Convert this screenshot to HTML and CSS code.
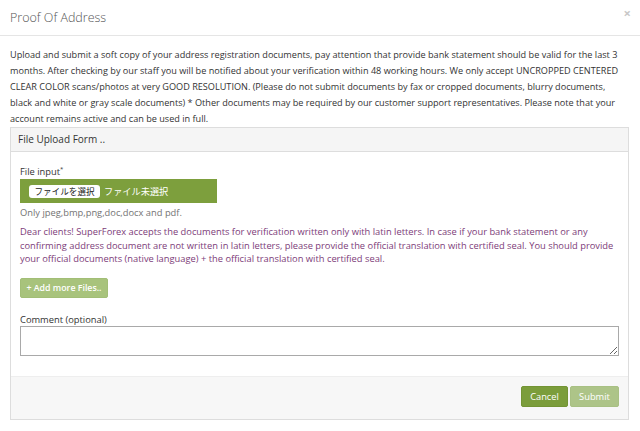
FILE: index.html
```html
<!DOCTYPE html>
<html lang="en">
<head>
<meta charset="utf-8">
<title>Proof Of Address</title>
<link rel="stylesheet" href="styles.css">
</head>
<body>
<div class="modal">
  <div class="modal-header">
    <h4 class="modal-title">Proof Of Address</h4>
    <span class="close">×</span>
  </div>
  <div class="modal-body">
    <p class="intro">Upload and submit a soft copy of your address registration documents, pay attention that provide bank statement should be valid for the last 3 months. After checking by our staff you will be notified about your verification within 48 working hours. We only accept UNCROPPED CENTERED CLEAR COLOR scans/photos at very GOOD RESOLUTION. (Please do not submit documents by fax or cropped documents, blurry documents, black and white or gray scale documents) * Other documents may be required by our customer support representatives. Please note that your account remains active and can be used in full.</p>
    <div class="panel">
      <div class="panel-heading">File Upload Form ..</div>
      <div class="panel-body">
        <label class="field-label">File input<sup>*</sup></label>
        <div class="file-input">
          <span class="file-btn">ファイルを選択</span>
          <span class="file-name">ファイル未選択</span>
        </div>
        <p class="help">Only jpeg,bmp,png,doc,docx and pdf.</p>
        <p class="notice">Dear clients! SuperForex accepts the documents for verification written only with latin letters. In case if your bank statement or any confirming address document are not written in latin letters, please provide the official translation with certified seal. You should provide your official documents (native language) + the official translation with certified seal.</p>
        <button class="btn btn-add" type="button">+ Add more Files..</button>
        <label class="comment-label">Comment (optional)</label>
        <textarea class="comment"></textarea>
      </div>
      <div class="panel-footer">
        <button class="btn btn-cancel" type="button">Cancel</button>
        <button class="btn btn-submit" type="button">Submit</button>
      </div>
    </div>
  </div>
</div>
</body>
</html>
```
FILE: styles.css
```css
html, body {
  margin: 0;
  padding: 0;
  background: #fff;
}
body {
  font-family: "Open Sans", "Noto Sans CJK JP", sans-serif;
  color: #333;
  font-size: 9.33px;
}
.modal-header {
  height: 35px;
  border-bottom: 1px solid #e5e5e5;
  display: flex;
  align-items: center;
  justify-content: space-between;
  padding: 0 9px 0 10px;
}
.modal-title {
  margin: 0;
  font-size: 12.5px;
  font-weight: 300;
  color: #555;
  line-height: 20px;
}
.close {
  font-size: 13px;
  font-weight: 700;
  color: #c8c8c8;
  line-height: 14px;
  margin-top: -9px;
}
.modal-body {
  padding: 11px 11px 0 10px;
}
.intro {
  margin: 0;
  line-height: 16px;
  font-size: 9.15px;
}
.panel {
  border: 1px solid #ddd;
}
.panel-heading {
  background: #f5f5f5;
  border-bottom: 1px solid #ddd;
  height: 23px;
  line-height: 23px;
  padding: 0 7px;
  font-size: 10px;
  color: #333;
}
.panel-body {
  padding: 13px 9px 20px 9px;
}
.field-label {
  display: block;
  line-height: 13px;
  height: 13px;
}
.field-label sup {
  font-size: 6px;
  line-height: 0;
  vertical-align: 4px;
}
.file-input {
  margin-top: 1px;
  width: 197px;
  height: 24px;
  box-sizing: border-box;
  background: #7d9f3d;
  display: flex;
  align-items: center;
  padding-left: 9px;
  gap: 4px;
}
.file-btn {
  background: #fff;
  color: #222;
  border-radius: 3px;
  height: 13px;
  line-height: 13px;
  width: 71px;
  text-align: center;
  font-size: 8.6px;
  font-family: "Noto Sans CJK JP", sans-serif;
}
.file-name {
  color: #fff;
  font-size: 9.2px;
  font-family: "Noto Sans CJK JP", sans-serif;
}
.help {
  margin: 3px 0 0;
  line-height: 13.3px;
  color: #737373;
}
.notice {
  margin: 6px 0 0;
  line-height: 13.3px;
  color: #7d3c79;
}
.btn {
  font-family: "Open Sans", sans-serif;
  border: 1px solid transparent;
  border-radius: 2px;
  color: #fff;
  padding: 0;
  cursor: pointer;
}
.btn-add {
  display: block;
  margin-top: 13px;
  width: 88px;
  height: 20px;
  background: #a8c37c;
  border-color: #a2be76;
  font-size: 8.8px;
  font-weight: 600;
}
.comment-label {
  display: block;
  margin-top: 16px;
  height: 12px;
  line-height: 12px;
}
.comment {
  display: block;
  box-sizing: border-box;
  width: 100%;
  height: 30px;
  margin: 0;
  border: 1px solid #a9a9a9;
  border-radius: 0;
  resize: vertical;
}
.panel-footer {
  background: #f7f7f7;
  border-top: 1px solid #eee;
  padding: 9px 9px 12px;
  display: flex;
  justify-content: flex-end;
  gap: 2px;
}
.panel-footer .btn {
  height: 21px;
  font-size: 9.3px;
}
.btn-cancel {
  width: 47px;
  background: #7b9d3b;
  border-color: #739434;
}
.btn-submit {
  width: 49px;
  background: #adc488;
  border-color: #a8c083;
}
```
